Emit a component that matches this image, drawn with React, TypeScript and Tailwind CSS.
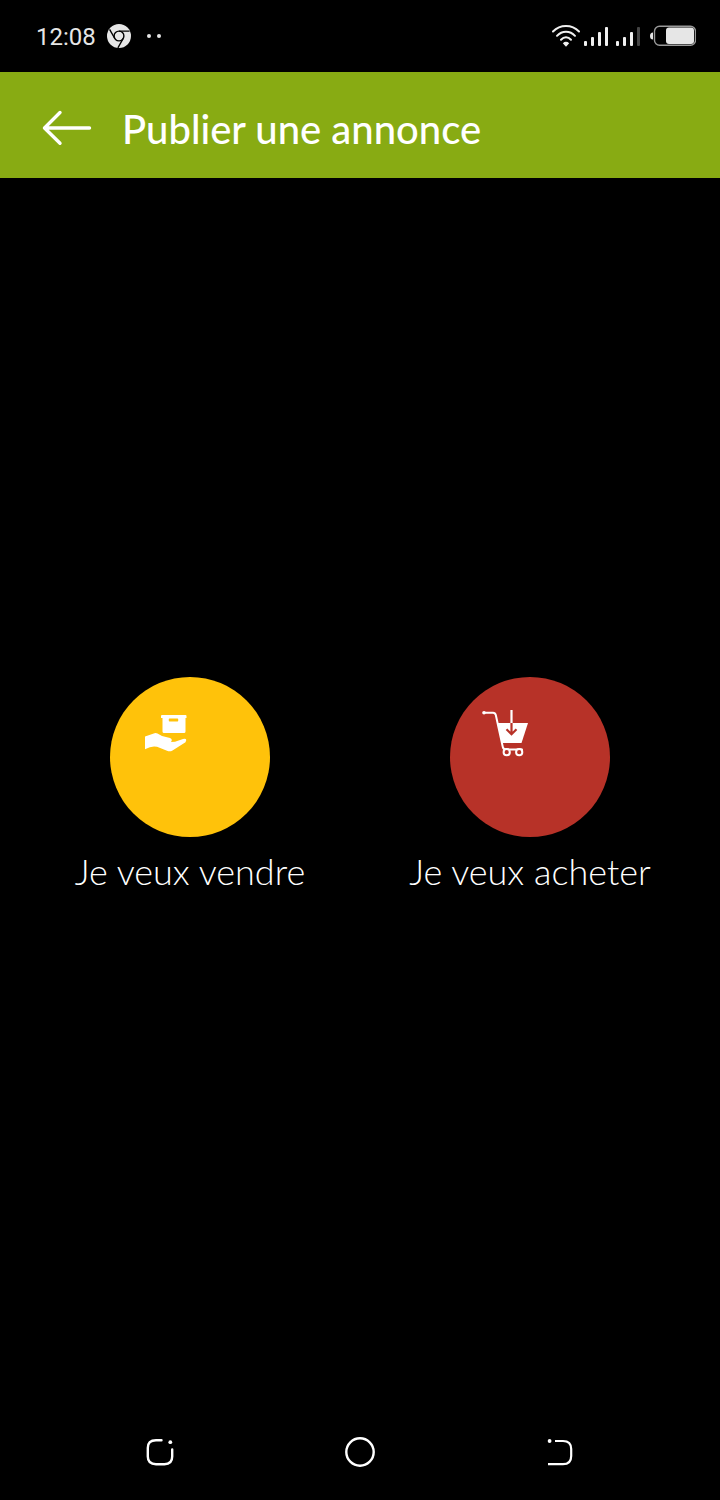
import type { ReactNode } from "react";

function StatusBar() {
  return (
    <div className="flex h-[72px] items-center pr-6 pl-9 text-[#e6e6e6]">
      <span className="pt-0.5 font-['Roboto',sans-serif] text-2xl">12:08</span>
      <svg className="ml-[11px] size-6" viewBox="0 0 24 24" aria-hidden="true">
        <circle cx="12" cy="12" r="12" fill="#e6e6e6" />
        <g fill="none" stroke="#000" strokeWidth="1.4">
          <circle cx="12" cy="12" r="4.9" />
          <path d="M12 7.1H22.6M7.8 14.5L2.6 5.4M16.2 14.5L10.9 23.8" />
        </g>
      </svg>
      <svg className="ml-4 h-6 w-4" viewBox="0 0 16 24" fill="#e6e6e6" aria-hidden="true">
        <circle cx="2" cy="12" r="2" />
        <circle cx="12" cy="12" r="2" />
      </svg>
      <div className="ml-auto flex items-center">
        <svg className="h-6 w-7" viewBox="0 0 28 24" aria-hidden="true">
          <g fill="none" stroke="#f0f0f0" strokeWidth="2" strokeLinecap="round">
            <path d="M1 7.5C8.2 0 19.8 0 27 7.5" />
            <path d="M5 11.8C10 6.3 18 6.3 23 11.8" />
            <path d="M9 15.7C12 12.5 16 12.5 19 15.7" />
          </g>
          <path d="M10.8 19.2Q14 16.4 17.2 19.2L14 22.8Z" fill="#f0f0f0" />
        </svg>
        <svg className="ml-1 h-6 w-14" viewBox="0 0 56 24" fill="#f0f0f0" aria-hidden="true">
          <rect x="0" y="17" width="3" height="5" rx="1" />
          <rect x="7" y="13" width="3" height="9" rx="1" />
          <rect x="14" y="8" width="3" height="14" rx="1" />
          <rect x="21" y="3" width="3" height="19" rx="1" />
          <rect x="32" y="17" width="3" height="5" rx="1" />
          <rect x="39" y="13" width="3" height="9" rx="1" />
          <rect x="46" y="8" width="3" height="14" rx="1" />
          <rect x="53" y="3" width="3" height="19" rx="1" fill="#444" />
        </svg>
        <svg className="ml-2.5 h-6 w-[46px]" viewBox="0 0 46 24" aria-hidden="true">
          <path d="M3 8.5Q0 8.5 0 12T3 15.5Z" fill="#e6e6e6" />
          <rect x="4.5" y="2.2" width="41" height="19" rx="5" fill="none" stroke="#999" strokeWidth="1.4" />
          <rect x="16" y="3.5" width="28" height="16.5" rx="3" fill="#e6e6e6" />
        </svg>
      </div>
    </div>
  );
}

function Choice({ label, color, children }: { label: string; color: string; children: ReactNode }) {
  return (
    <button type="button" className="flex flex-1 flex-col items-center gap-2.5 pb-2.5">
      <span className={`flex size-40 items-start justify-start p-8 ${color}`}>{children}</span>
      <span className="text-4xl leading-12 font-light whitespace-nowrap">{label}</span>
    </button>
  );
}

export default function App() {
  return (
    <div className="flex min-h-screen flex-col bg-black font-['Lato',sans-serif] text-white">
      <StatusBar />
      <header className="flex h-[106px] items-center gap-8 bg-[#88ab13] px-[42px]">
        <button type="button" aria-label="Retour">
          <svg className="h-10 w-12 overflow-visible" viewBox="0 0 48 40" fill="none" stroke="#fff" strokeWidth="3.4" strokeLinecap="round" strokeLinejoin="round">
            <path d="M47.5 23H2.5M18 7.5L2.5 23L18 38.3" />
          </svg>
        </button>
        <h1 className="pt-2 text-[40px] leading-12 font-medium">Publier une annonce</h1>
      </header>
      <main className="flex flex-1 items-center px-5">
        <Choice label="Je veux vendre" color="rounded-full bg-[#ffc20a]">
          <svg className="size-12" viewBox="0 0 48 48" fill="#fff" aria-hidden="true">
            <path fillRule="evenodd" d="M20 6H43.5Q44.5 6 44.5 7V9H43.5V22.5Q43.5 24 42 24H22Q20.5 24 20.5 22.5V9H19V7Q19 6 20 6ZM27.5 9.6Q26.8 9.6 26.8 10.3V11.7Q26.8 12.4 27.5 12.4H35.5Q36.2 12.4 36.2 11.7V10.3Q36.2 9.6 35.5 9.6Z" />
            <path d="M3 27.5L12.5 24.2Q14 23.8 15.5 24.5L20 27L28 29Q31 30.5 29 33L33 32.8L41 30Q44 29.2 44.3 31L43.5 33.2L30.5 41.4Q28 43 25 41.8L15 37.8Q10 36.3 3 40.2Z" />
          </svg>
        </Choice>
        <Choice label="Je veux acheter" color="rounded-full bg-[#b73228]">
          <svg className="size-12" viewBox="0 0 48 48" fill="none" stroke="#fff" strokeWidth="2" aria-hidden="true">
            <path d="M2 3.7H11Q13.2 3.7 13.8 6L20.8 38Q21.4 40.5 24 40.5H40" strokeLinecap="round" />
            <circle cx="2" cy="3.7" r="1.8" fill="#fff" stroke="none" />
            <path d="M15.5 14H46L39.5 34H20Z" fill="#fff" stroke="none" />
            <path d="M29.5 1V14" strokeWidth="2.2" />
            <path d="M29.5 14V25M24.5 20.2L29.5 25.2L34.5 20.2" stroke="#b73228" strokeWidth="2.2" />
            <circle cx="24.7" cy="43.2" r="3.1" fill="#b73228" />
            <circle cx="37.2" cy="43.2" r="3.1" fill="#b73228" />
          </svg>
        </Choice>
      </main>
      <nav className="grid h-24 grid-cols-3 items-center justify-items-center px-15">
        <button type="button" aria-label="Applications récentes">
          <svg className="size-8" viewBox="0 0 32 32" fill="none" stroke="#fff" strokeWidth="2.4" strokeLinecap="round">
            <path d="M17.5 4.2H12Q3.8 4.2 3.8 12V20.5Q3.8 28.2 12 28.2H20.5Q28.2 28.2 28.2 20.5V13.5" />
            <circle cx="26.3" cy="6.2" r="1.9" fill="#fff" stroke="none" />
          </svg>
        </button>
        <button type="button" aria-label="Accueil">
          <svg className="size-8" viewBox="0 0 32 32" fill="none" stroke="#fff" strokeWidth="2.4">
            <circle cx="16" cy="16" r="13.7" />
          </svg>
        </button>
        <button type="button" aria-label="Précédent">
          <svg className="size-8" viewBox="0 0 32 32" fill="none" stroke="#fff" strokeWidth="2.2">
            <path d="M11 5H19Q27.2 5 27.2 13V20Q27.2 28.2 19 28.2H4" />
            <circle cx="5.6" cy="5" r="1.9" fill="#fff" stroke="none" />
          </svg>
        </button>
      </nav>
    </div>
  );
}
